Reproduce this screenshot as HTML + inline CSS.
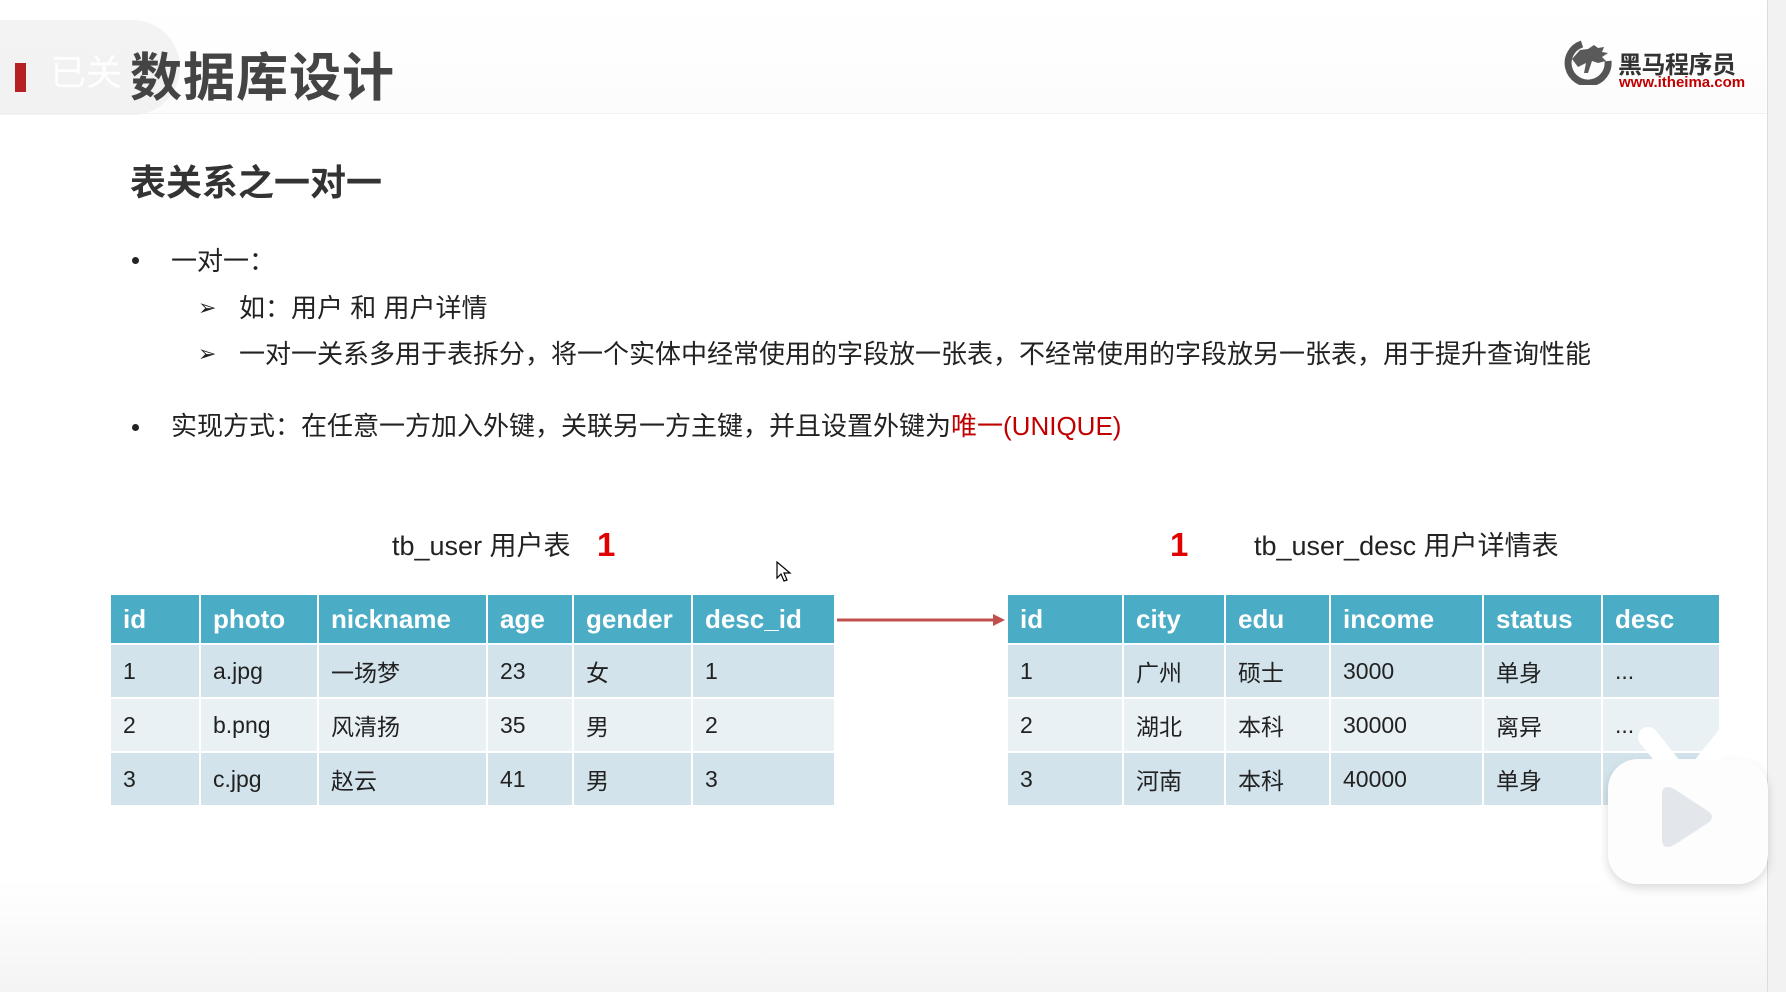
<!DOCTYPE html>
<html><head><meta charset="utf-8"><style>
*{margin:0;padding:0;box-sizing:border-box}
body{width:1786px;height:992px;overflow:hidden;background:#fff;position:relative;font-family:"Liberation Sans","Noto Sans CJK SC",sans-serif;color:#222}
.abs{position:absolute}
.bg{position:absolute;left:0;top:0;width:1786px;height:992px;background:linear-gradient(#fff 0,#fff 880px,#f4f4f4 992px)}
.hdr{position:absolute;left:0;top:0;width:1768px;height:114px;background:linear-gradient(#fff,#fcfcfc);border-bottom:1px solid #f2f2f2}
.rstrip{position:absolute;left:1767px;top:0;width:19px;height:992px;background:#f2f2f2;border-left:1px solid #ddd}
table{position:absolute;border-collapse:collapse;font-size:23px}
td{border:2px solid #fff;padding-left:12px;vertical-align:middle}
tr.h td{background:#4bacc6;color:#fff;font-weight:bold;font-size:26px;height:50px}
tr.a td{background:#d2e3eb;height:54px}
tr.b td{background:#e9f1f5;height:54px}
.line{position:absolute;font-size:26px;color:#222;white-space:nowrap;line-height:32px}
.dot{position:absolute;width:7px;height:7px;border-radius:50%;background:#222}
</style></head><body>
<div class="bg"></div>
<div class="hdr"></div>
<div class="rstrip"></div>
<div class="abs" style="left:0;top:20px;width:180px;height:95px;background:rgba(235,235,235,.6);border-radius:0 50px 50px 0"></div>
<div class="abs" style="left:50px;top:44px;font-size:36px;color:rgba(255,255,255,.9)">已关</div>
<div class="abs" style="left:15px;top:63px;width:11px;height:29px;background:#b52025"></div>
<div class="abs" style="left:130px;top:36px;font-size:52px;font-weight:bold;color:#444;letter-spacing:1px">数据库设计</div>
<svg class="abs" style="left:1558px;top:39px" width="58" height="46" viewBox="0 0 58 46">
<path d="M24 5 A20 20 0 1 0 50 22" fill="none" stroke="#555" stroke-width="7"/>
<path d="M14 20 L22 11 L30 10 L36 6 L40 9 L46 8 L44 13 L50 14 L44 18 L48 22 L40 24 L34 22 L30 34 L26 34 L28 24 L20 28 Z" fill="#5a5a5a"/>
</svg>
<div class="abs" style="left:1618px;top:45px;font-size:24px;font-weight:bold;color:#333;letter-spacing:-0.5px">黑马程序员</div>
<div class="abs" style="left:1619px;top:74px;font-size:15px;font-weight:bold;color:#c00000">www.itheima.com</div>

<div class="abs" style="left:130px;top:154px;font-size:36px;font-weight:bold;color:#333">表关系之一对一</div>
<div class="dot" style="left:132px;top:257px"></div>
<div class="line" style="left:171px;top:245px">一对一：</div>
<div class="line" style="left:198px;top:292px;font-size:22px">➢</div>
<div class="line" style="left:239px;top:292px">如：用户 和 用户详情</div>
<div class="line" style="left:198px;top:338px;font-size:22px">➢</div>
<div class="line" style="left:239px;top:338px">一对一关系多用于表拆分，将一个实体中经常使用的字段放一张表，不经常使用的字段放另一张表，用于提升查询性能</div>
<div class="dot" style="left:132px;top:424px"></div>
<div class="line" style="left:171px;top:410px">实现方式：在任意一方加入外键，关联另一方主键，并且设置外键为<span style="color:#c00000">唯一(UNIQUE)</span></div>

<div class="abs" style="left:392px;top:524px;font-size:27px;color:#222">tb_user 用户表</div>
<div class="abs" style="left:597px;top:526px;font-size:33px;font-weight:bold;color:#e00000">1</div>
<div class="abs" style="left:1170px;top:526px;font-size:33px;font-weight:bold;color:#e00000">1</div>
<div class="abs" style="left:1254px;top:524px;font-size:27px;color:#222">tb_user_desc 用户详情表</div>

<table style="left:109px;top:593px;width:727px">
<colgroup><col style="width:90px"><col style="width:118px"><col style="width:169px"><col style="width:86px"><col style="width:119px"><col></colgroup>
<tr class="h"><td>id</td><td>photo</td><td>nickname</td><td>age</td><td>gender</td><td>desc_id</td></tr>
<tr class="a"><td>1</td><td>a.jpg</td><td>一场梦</td><td>23</td><td>女</td><td>1</td></tr>
<tr class="b"><td>2</td><td>b.png</td><td>风清扬</td><td>35</td><td>男</td><td>2</td></tr>
<tr class="a"><td>3</td><td>c.jpg</td><td>赵云</td><td>41</td><td>男</td><td>3</td></tr>
</table>

<svg class="abs" style="left:835px;top:612px" width="172" height="16"><line x1="2" y1="8" x2="160" y2="8" stroke="#c0504d" stroke-width="3"/><path d="M158 2 L170 8 L158 14 Z" fill="#c0504d"/></svg>

<table style="left:1006px;top:593px;width:715px">
<colgroup><col style="width:116px"><col style="width:102px"><col style="width:105px"><col style="width:153px"><col style="width:119px"><col></colgroup>
<tr class="h"><td>id</td><td>city</td><td>edu</td><td>income</td><td>status</td><td>desc</td></tr>
<tr class="a"><td>1</td><td>广州</td><td>硕士</td><td>3000</td><td>单身</td><td>...</td></tr>
<tr class="b"><td>2</td><td>湖北</td><td>本科</td><td>30000</td><td>离异</td><td>...</td></tr>
<tr class="a"><td>3</td><td>河南</td><td>本科</td><td>40000</td><td>单身</td><td>...</td></tr>
</table>

<svg class="abs" style="left:776px;top:561px" width="16" height="22"><path d="M1 1 L1 17 L5 13 L8 20 L11 19 L8 12 L14 12 Z" fill="#fff" stroke="#000" stroke-width="1.2"/></svg>

<div class="abs" style="left:1608px;top:760px;width:160px;height:124px;border-radius:30px;box-shadow:0 4px 10px rgba(0,0,0,.15)"></div>
<svg class="abs" style="left:1602px;top:725px" width="170" height="165" viewBox="0 0 170 165">
<path d="M46 12 L70 42 M124 12 L100 42" stroke="#fff" stroke-width="20" stroke-linecap="round"/>
<rect x="6" y="34" width="160" height="124" rx="30" fill="#fdfdfd"/>
<path d="M60 70 Q60 58 72 64 L106 86 Q114 92 106 98 L72 120 Q60 126 60 114 Z" fill="#e3e6ea"/>
</svg>
</body></html>
